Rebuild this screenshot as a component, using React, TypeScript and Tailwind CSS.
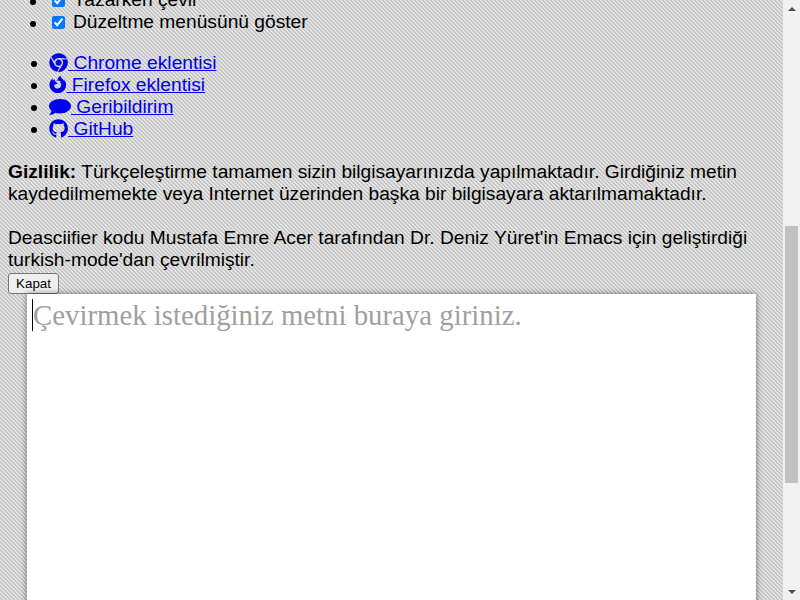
import React from 'react';
import { FaChrome, FaFirefoxBrowser, FaGithub } from 'react-icons/fa';

const links = [
  { label: 'Chrome eklentisi', icon: <FaChrome className="inline h-[19.2px] w-auto align-[-3px]" /> },
  { label: 'Firefox eklentisi', icon: <FaFirefoxBrowser className="inline h-[19.2px] w-[17.5px] align-[-3px]" /> },
  {
    label: 'Geribildirim',
    icon: (
      <svg viewBox="0 0 22 18" className="inline w-[22px] h-[18px] align-[-3px]" fill="currentColor">
        <path d="M11 1C5 1 0 4 0 8c0 2 1 3.500 2.500 4.800C2.300 14.500 1.200 16 0 17c2.500 0 4.800-1 6.200-2.300 1.500.5 3 .8 4.800.8 6 0 11-3.300 11-7.500S17 1 11 1z" />
      </svg>
    ),
  },
  { label: 'GitHub', icon: <FaGithub className="inline h-[19.2px] w-auto align-[-3px]" /> },
];

export default function App() {
  return (
    <div className="flex h-screen overflow-hidden font-['Liberation_Sans',Arial,sans-serif] text-[19.2px] leading-[22px] text-black">
      {/* Page content, scrolled down a bit */}
      <main className="flex-1 min-w-0 overflow-hidden px-2 bg-[#d9d9d9] bg-[repeating-linear-gradient(45deg,#e6e6e6_0px,#e6e6e6_1.414px,#c4c4c4_1.414px,#c4c4c4_2.828px)]">
        <ul className="list-disc pl-10 -mt-[11px]">
          <li>
            <label className="flex items-center gap-[8px] pl-[4px]">
              <input type="checkbox" defaultChecked className="w-[13px] h-[13px] accent-[#0075ff]" />
              Yazarken çevir
            </label>
          </li>
          <li>
            <label className="flex items-center gap-[8px] pl-[4px]">
              <input type="checkbox" defaultChecked className="w-[13px] h-[13px] accent-[#0075ff]" />
              Düzeltme menüsünü göster
            </label>
          </li>
        </ul>

        <ul className="list-disc pl-10 mt-[19px] border-l border-[#cfcfcf]">
          {links.map((l) => (
            <li key={l.label}>
              <a href="#" className="text-[#0000ee] underline">
                {l.icon} {l.label}
              </a>
            </li>
          ))}
        </ul>

        <p className="mt-[21px]">
          <b>Gizlilik:</b> Türkçeleştirme tamamen sizin bilgisayarınızda yapılmaktadır. Girdiğiniz metin kaydedilmemekte
          veya Internet üzerinden başka bir bilgisayara aktarılmamaktadır.
        </p>
        <p className="mt-[22px]">
          Deasciifier kodu Mustafa Emre Acer tarafından Dr. Deniz Yüret'in Emacs için geliştirdiği turkish-mode'dan
          çevrilmiştir.
        </p>
        <button className="block mt-[2px] h-[21px] w-[51px] rounded-[3px] border border-[#767676] bg-[#efefef] font-['Liberation_Sans',Arial,sans-serif] text-[13.33px] leading-none">
          Kapat
        </button>

        <div className="ml-[19px] mr-[19px] h-[400px] bg-white shadow-[0_0_6px_rgba(0,0,0,0.5)] pl-[5px] pt-[5px]">
          <div className="flex font-['Liberation_Serif','Times_New_Roman',serif] text-[28.8px] leading-[32px] text-[#a0a0a0]">
            <span className="w-px h-[32px] bg-black" />
            Çevirmek istediğiniz metni buraya giriniz.
          </div>
        </div>
      </main>

      {/* Scrollbar */}
      <aside className="w-[17px] shrink-0 flex flex-col bg-[#f1f1f1]">
        <div className="h-[17px] flex items-center justify-center">
          <div className="w-0 h-0 border-x-[4px] border-x-transparent border-b-[4px] border-b-[#505050]" />
        </div>
        <div className="h-[209px]" />
        <div className="h-[257px] mx-[2px] bg-[#c1c1c1]" />
        <div className="flex-1" />
        <div className="h-[17px] flex items-center justify-center">
          <div className="w-0 h-0 border-x-[4px] border-x-transparent border-t-[4px] border-t-[#505050]" />
        </div>
      </aside>
    </div>
  );
}
